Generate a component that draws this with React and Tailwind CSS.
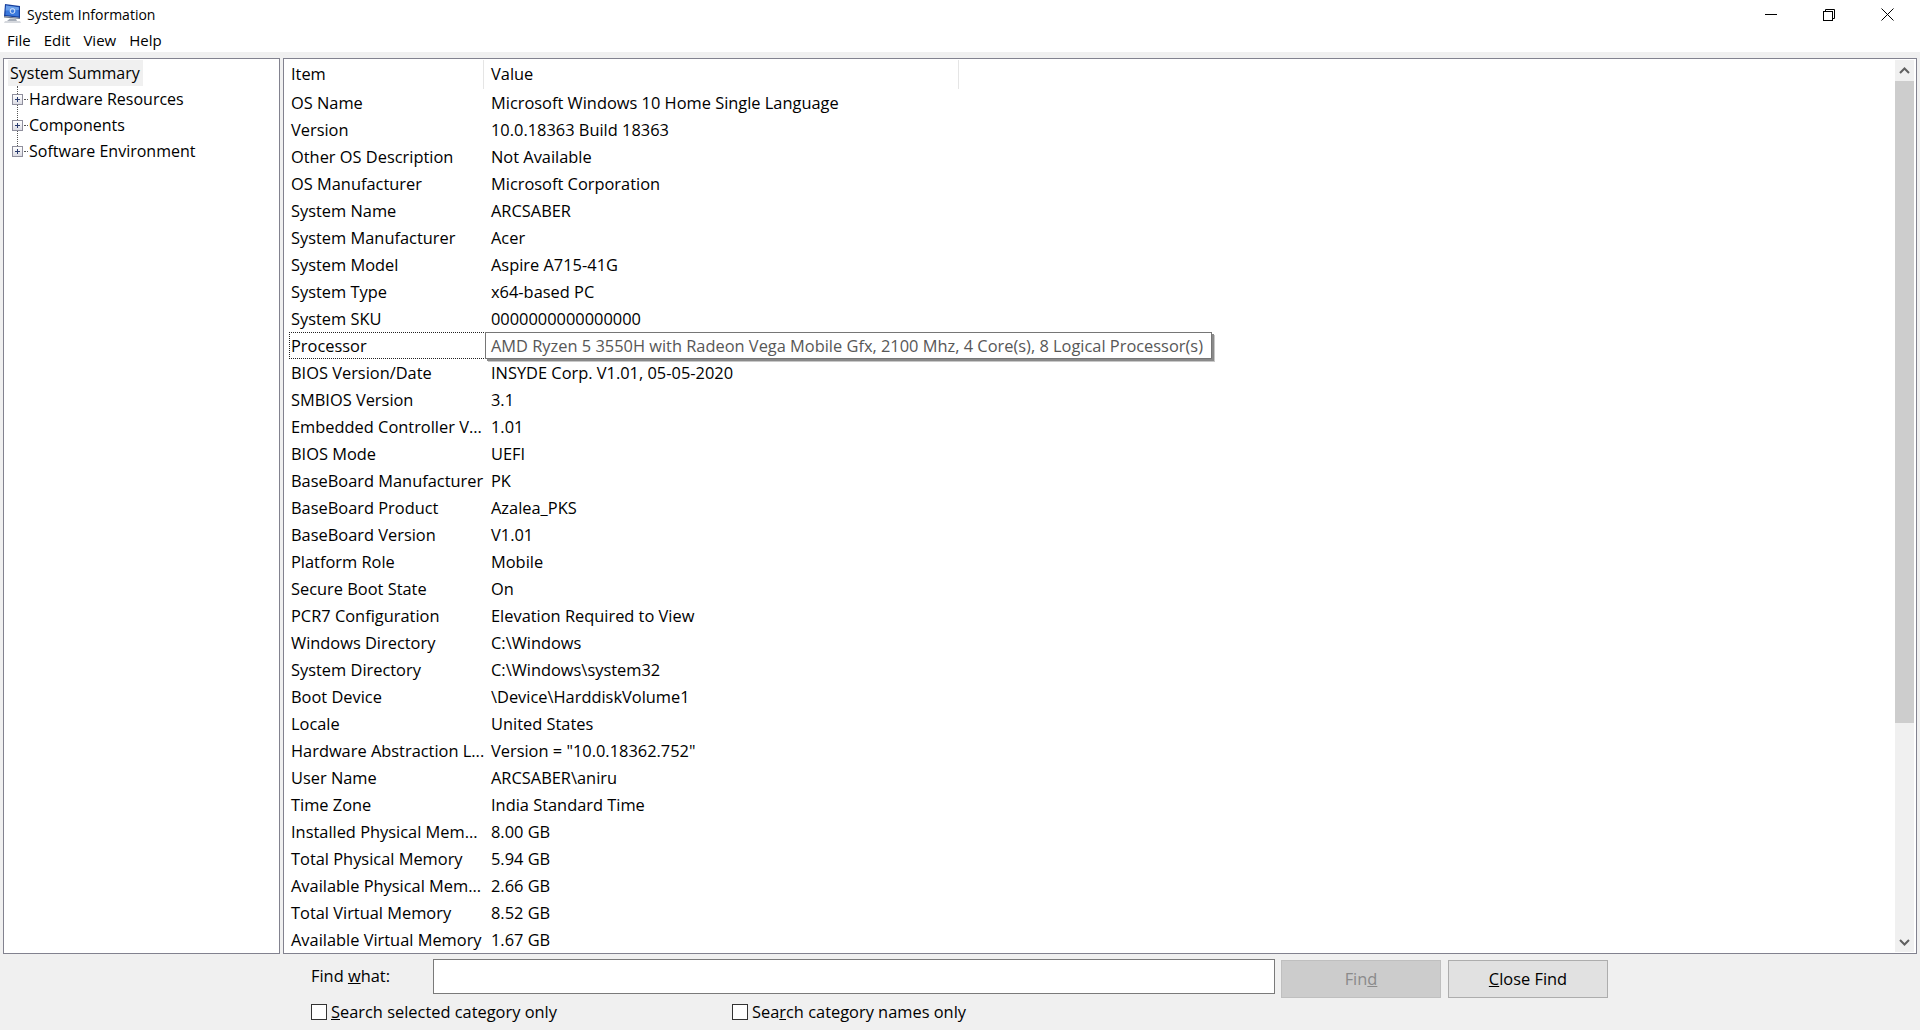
import React from "react";

const rows = [
  ["OS Name", "Microsoft Windows 10 Home Single Language"],
  ["Version", "10.0.18363 Build 18363"],
  ["Other OS Description", "Not Available"],
  ["OS Manufacturer", "Microsoft Corporation"],
  ["System Name", "ARCSABER"],
  ["System Manufacturer", "Acer"],
  ["System Model", "Aspire A715-41G"],
  ["System Type", "x64-based PC"],
  ["System SKU", "0000000000000000"],
  ["Processor", ""],
  ["BIOS Version/Date", "INSYDE Corp. V1.01, 05-05-2020"],
  ["SMBIOS Version", "3.1"],
  ["Embedded Controller V...", "1.01"],
  ["BIOS Mode", "UEFI"],
  ["BaseBoard Manufacturer", "PK"],
  ["BaseBoard Product", "Azalea_PKS"],
  ["BaseBoard Version", "V1.01"],
  ["Platform Role", "Mobile"],
  ["Secure Boot State", "On"],
  ["PCR7 Configuration", "Elevation Required to View"],
  ["Windows Directory", "C:\\Windows"],
  ["System Directory", "C:\\Windows\\system32"],
  ["Boot Device", "\\Device\\HarddiskVolume1"],
  ["Locale", "United States"],
  ["Hardware Abstraction L...", 'Version = "10.0.18362.752"'],
  ["User Name", "ARCSABER\\aniru"],
  ["Time Zone", "India Standard Time"],
  ["Installed Physical Mem...", "8.00 GB"],
  ["Total Physical Memory", "5.94 GB"],
  ["Available Physical Mem...", "2.66 GB"],
  ["Total Virtual Memory", "8.52 GB"],
  ["Available Virtual Memory", "1.67 GB"],
];

const AppIcon = () => (
  <svg width="19" height="20" viewBox="0 0 19 20" className="-mt-[3px]">
    <path d="M2 1 L17 3 L17 15 L1 13 Z" fill="#173f9c" />
    <path d="M3 2.5 L15.8 4.2 L15.8 13.6 L2.4 11.9 Z" fill="#3a78dc" />
    <path d="M3 2.5 L15.8 4.2 L15.8 7 L2.7 7.5 Z" fill="#6b9fea" />
    <circle cx="9.5" cy="8" r="2.4" fill="none" stroke="#dbe8fb" strokeWidth="1" />
    <path d="M1 13 L17 15 L17 16 L1 14.5 Z" fill="#6f7a8c" />
    <path d="M7 15.5 L13 16 L14 18 L4 18 Z" fill="#a6adb8" />
    <path d="M2 18 L17 18 L18 20 L1 20 Z" fill="#d5d8dd" />
  </svg>
);

const Expander = () => (
  <span className="relative w-[11px] h-[11px] border border-[#8f8f9d] bg-[linear-gradient(#ffffff,#dcdce4)] shrink-0">
    <span className="absolute left-[2px] top-[4px] w-[5px] h-px bg-[#2a3c6e]" />
    <span className="absolute left-[4px] top-[2px] w-px h-[5px] bg-[#2a3c6e]" />
  </span>
);

const TreeItem = ({ label }) => (
  <div className="flex items-center h-[26px] pl-[8px]">
    <Expander />
    <span className="w-[4px] mx-px border-t border-dotted border-[#555]" />
    <span>{label}</span>
  </div>
);

export default function App() {
  return (
    <div className="w-[1920px] h-[1030px] overflow-hidden flex flex-col bg-[#f0f0f0] text-black text-[16.4px] font-['Open_Sans','Noto_Sans',sans-serif]">
      {/* title bar */}
      <div className="h-[29px] bg-white flex items-center justify-between shrink-0">
        <div className="flex items-center pl-[3px] gap-[5px] text-[14px]">
          <AppIcon />
          <span>System Information</span>
        </div>
        <div className="flex items-center pr-[4px]">
          <div className="w-[58px] h-[29px] flex items-center justify-center">
            <svg width="12" height="12" viewBox="0 0 12 12"><path d="M0 5.5H12" stroke="#000" /></svg>
          </div>
          <div className="w-[58px] h-[29px] flex items-center justify-center">
            <svg width="12" height="12" viewBox="0 0 12 12" fill="none" stroke="#000"><rect x="0.5" y="2.5" width="9" height="9" /><path d="M2.5 2.5V0.5H11.5V9.5H9.5" /></svg>
          </div>
          <div className="w-[58px] h-[29px] flex items-center justify-center">
            <svg width="13" height="13" viewBox="0 0 13 13" stroke="#000"><path d="M0.5 0.5L12.5 12.5M12.5 0.5L0.5 12.5" /></svg>
          </div>
        </div>
      </div>

      {/* menu */}
      <div className="h-[23px] bg-white flex items-center pl-[7px] gap-[13px] text-[15px] shrink-0">
        <span>File</span>
        <span>Edit</span>
        <span>View</span>
        <span>Help</span>
      </div>

      {/* panes */}
      <div className="flex gap-[3px] pl-[3px] pr-[3px] pt-[6px] h-[902px] shrink-0">
        {/* tree */}
        <div className="w-[277px] border border-[#82828f] bg-white pt-[1px] relative text-[16px]">
          <div className="h-[26px] w-[135px] ml-[4px] bg-[#f0f0f0] px-[2px] flex items-center">System Summary</div>
          <div className="absolute left-[13px] top-[27px] h-[62px] border-l border-dotted border-[#555]" />
          <div className="relative">
            <TreeItem label="Hardware Resources" />
            <TreeItem label="Components" />
            <TreeItem label="Software Environment" />
          </div>
        </div>

        {/* list */}
        <div className="flex-1 border border-[#82828f] bg-white flex relative overflow-hidden">
          <div className="flex-1 overflow-hidden">
            <div className="flex h-[31px] items-center">
              <div className="w-[200px] pl-[7px] h-[29px] flex items-center border-r border-[#e5e5e5]">Item</div>
              <div className="w-[475px] pl-[7px] h-[29px] flex items-center border-r border-[#e5e5e5]">Value</div>
            </div>
            <div className="flex flex-col">
              {rows.map(([item, value]) => (
                <div key={item} className="flex h-[27px] items-center shrink-0 whitespace-nowrap">
                  <div className="w-[200px] pl-[7px]">{item}</div>
                  <div className="pl-[7px]">{value}</div>
                </div>
              ))}
            </div>
          </div>

          {/* scrollbar */}
          <div className="w-[19px] bg-[#f0f0f0] flex flex-col shrink-0 mr-[2px] mt-px mb-px">
            <div className="h-[21px] flex items-center justify-center">
              <svg width="11" height="7" viewBox="0 0 11 7" fill="none" stroke="#606060" strokeWidth="2"><path d="M1 6L5.5 1.5L10 6" /></svg>
            </div>
            <div className="h-[642px] bg-[#cdcdcd]" />
            <div className="flex-1" />
            <div className="h-[20px] flex items-center justify-center">
              <svg width="11" height="7" viewBox="0 0 11 7" fill="none" stroke="#606060" strokeWidth="2"><path d="M1 1L5.5 5.5L10 1" /></svg>
            </div>
          </div>

          {/* selected row + tooltip */}
          <div className="absolute left-[5px] top-[273px] w-[197px] h-[27px] border border-dotted border-[#222]" />
          <div className="absolute left-[201px] top-[273px] h-[27px] w-[727px] pl-[5px] pt-px bg-white border border-[#767676] text-[#575757] flex items-center whitespace-nowrap shadow-[2px_2px_0_#8a8a8a,3px_3px_0_#c8c8c8]">
            AMD Ryzen 5 3550H with Radeon Vega Mobile Gfx, 2100 Mhz, 4 Core(s), 8 Logical Processor(s)
          </div>
        </div>
      </div>

      {/* find bar */}
      <div className="flex-1">
        <div className="flex items-start h-[44px] pt-[6px] pl-[311px]">
          <span className="w-[122px] h-[33px] flex items-center whitespace-pre">Find <u>w</u>hat:</span>
          <div className="w-[842px] h-[35px] -mt-[1px] bg-white border border-[#7a7a7a]" />
          <div className="ml-[6px] w-[160px] h-[38px] bg-[#cccccc] border border-[#bfbfbf] text-[#8a8a8a] flex items-center justify-center">
            <span>Fin<u>d</u></span>
          </div>
          <div className="ml-[7px] w-[160px] h-[38px] bg-[#e1e1e1] border border-[#adadad] flex items-center justify-center">
            <span><u>C</u>lose Find</span>
          </div>
        </div>
        <div className="flex items-center h-[28px] pl-[311px]">
          <div className="w-[421px] flex items-center">
            <span className="w-[16px] h-[16px] bg-white border border-[#333] mr-[4px]" />
            <span><u>S</u>earch selected category only</span>
          </div>
          <div className="flex items-center">
            <span className="w-[16px] h-[16px] bg-white border border-[#333] mr-[4px]" />
            <span>Sea<u>r</u>ch category names only</span>
          </div>
        </div>
      </div>
    </div>
  );
}
